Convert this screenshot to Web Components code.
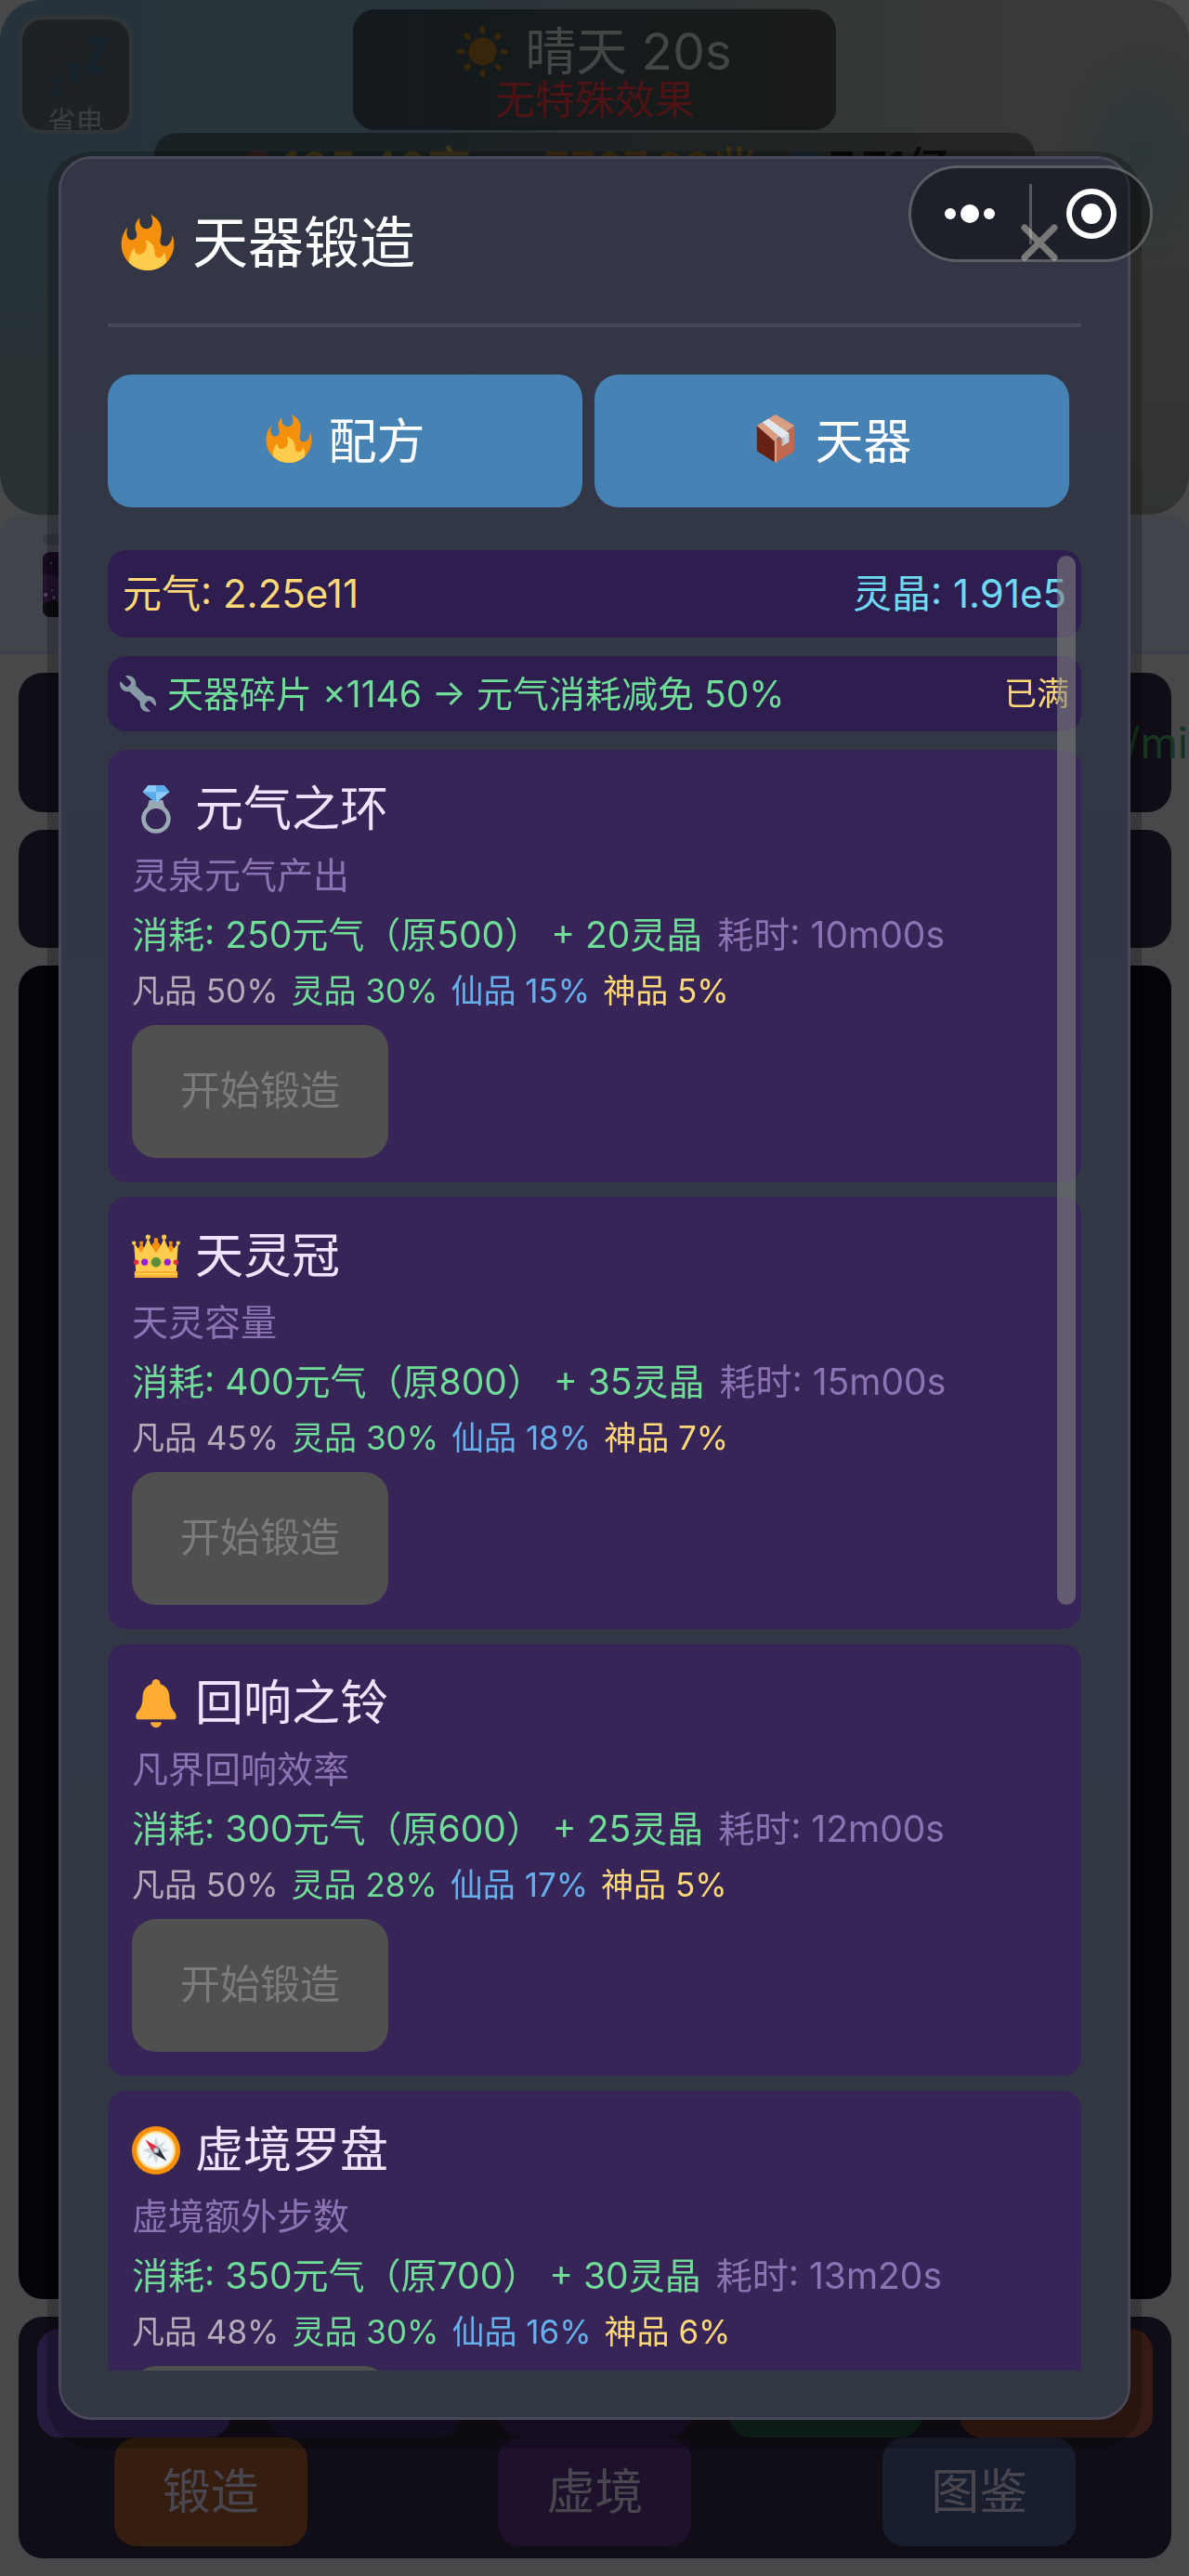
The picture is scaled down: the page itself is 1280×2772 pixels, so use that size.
<!DOCTYPE html>
<html lang="zh-CN">
<head>
<meta charset="utf-8">
<meta name="viewport" content="width=device-width, initial-scale=1">
<title>天器锻造</title>
<style>
html, body { margin: 0; height: 100%; }
body { background: #47484a; font-family: Inter, "Noto Sans CJK SC", sans-serif; overflow: hidden; }
</style>
</head>
<body>
<game-app></game-app>
<script>
const define = (name, html, setup) => {
  const template = document.createElement('template');
  template.innerHTML = '<style>*{box-sizing:border-box}button{font:inherit;border:0;margin:0;padding:0}p,h1,h2{margin:0;font-weight:400}</style>' + html;
  customElements.define(name, class extends HTMLElement {
    constructor() {
      super();
      this.attachShadow({ mode: 'open' }).append(template.content.cloneNode(true));
    }
    connectedCallback() { if (setup) setup(this, this.shadowRoot); }
  });
};

const ICONS = {
  fire: `<path fill="#F4900C" d="M35 19c0-2.062-.367-4.039-1.04-5.868-.46 5.389-3.333 8.157-6.335 6.868-2.812-1.208-.917-5.917-.777-8.164.236-3.809-.012-8.169-6.931-11.794 2.875 5.5.333 8.917-2.333 9.125-2.958.231-5.667-2.542-4.667-7.042-3.238 2.386-3.332 6.402-2.333 9 1.042 2.708-.042 4.958-2.583 5.208-2.84.28-4.418-3.041-2.963-8.333C2.52 10.965 1 14.805 1 19c0 9.389 7.611 17 17 17s17-7.611 17-17z"/><path fill="#FFCC4D" d="M28.394 23.999c.148 3.084-2.561 4.293-4.019 3.709-2.106-.843-1.541-2.291-2.083-5.291s-2.625-5.083-5.708-6c2.25 6.333-1.247 8.667-3.08 9.084-1.872.426-3.753-.001-3.968-4.007C7.352 23.668 6 26.676 6 30c0 .368.023.73.055 1.09C9.125 34.124 13.342 36 18 36s8.875-1.876 11.945-4.91c.032-.36.055-.722.055-1.09 0-2.187-.584-4.236-1.606-6.001z"/>`,
  box: `<path fill="#662113" d="M4 8.3L18 20v16L5 27.8q-1-.6-1-1.800z"/><path fill="#C1694F" d="M32 8.300L18 20v16l13-8q1-.6 1-2z"/><path fill="#D99E82" d="M17 .5q1-.6 2 0L32 8.300 18.800 18v17.500L18 36l-.8-.5V20L4 8.300z"/><path fill="#CCD6DD" d="M8.300 5.800L12.500 3.300 28 14v6.500l-5.300 3.200v-6z"/><path fill="#E1E8ED" d="M8.300 5.800L12.500 3.300 28 14l-5.300 3.800z"/><path fill="#AEBBC1" d="M22.700 17.800l1.500-1v6l-1.500.9z"/>`,
  wrench: `<path fill="#8899A6" d="M27.989 19.977c-.622 0-1.225.078-1.806.213L15.811 9.818c.134-.581.212-1.184.212-1.806C16.023 3.587 12.436 0 8.012 0 7.110 0 6.248.160 5.440.434l5.144 5.144c.791.791.791 2.074 0 2.865l-2.143 2.143c-.791.791-2.074.791-2.865 0L.434 5.442C.160 6.248 0 7.110 0 8.012c0 4.424 3.587 8.011 8.012 8.011.622 0 1.225-.078 1.806-.212L20.190 26.183c-.135.581-.213 1.184-.213 1.806C19.977 32.413 23.564 36 27.989 36c.901 0 1.763-.160 2.569-.435l-5.144-5.144c-.791-.791-.791-2.074 0-2.865l2.143-2.142c.791-.791 2.074-.791 2.865 0l5.144 5.144C35.840 29.752 36 28.890 36 27.989c0-4.425-3.587-8.012-8.011-8.012z"/>`,
  ring: `<circle cx="18" cy="25" r="9.300" fill="none" stroke="#99AAB5" stroke-width="3.200"/><path fill="#99AAB5" d="M13 11h10l2 7-3-1.500q-4-1.200-8 0L11 18z"/><path fill="#8CCAF7" d="M12 0h12l4 5-10 8L8 5z"/><path fill="#5DADEC" d="M18 0h6l4 5H18zM8 5h10v8z"/>`,
  crown: `<g fill="#F4900C"><path d="M3 15L7 8l4 7 7-10 7 10 4-7 4 7z"/><circle cx="7" cy="8" r="1.400"/><circle cx="18" cy="5.700" r="1.600"/><circle cx="29" cy="8" r="1.400"/></g><path fill="#FFCC4D" d="M1.500 8C4 11 5 13 7 15c2-3 4-7 5-11 2 5 3 8 6 11 3-3 4-6 6-11 1 4 3 8 5 11 2-2 3-4 5.500-7L33 30H3z"/><g fill="#FFCC4D"><circle cx="12" cy="3.500" r="1.800"/><circle cx="24" cy="3.500" r="1.800"/><circle cx="1.500" cy="8" r="1.500"/><circle cx="34.500" cy="8" r="1.500"/></g><path fill="#FFAC33" d="M2 29h32v5H2z"/><path fill="#FFCC4D" d="M2 30.500h32v1.500H2z"/><circle cx="3.200" cy="22.300" r="1.900" fill="#DD2E44"/><circle cx="32.800" cy="22.300" r="1.900" fill="#DD2E44"/><circle cx="9.500" cy="22.300" r="2.500" fill="#9721D8"/><circle cx="26.500" cy="22.300" r="2.500" fill="#9721D8"/><circle cx="18" cy="22.300" r="3.700" fill="#5C913B"/>`,
  bell: `<g fill="#FFAC33"><path d="M28 13c0 11 5 10 5 15 0 0 0 2-2 2H5c-2 0-2-2-2-2 0-5 5-4 5-15C8 7.478 12.477 3 18 3s10 4.478 10 10z"/><circle cx="18" cy="3" r="3"/><path d="M18 36c2.209 0 4-1.791 4-4h-8c0 2.209 1.791 4 4 4z"/></g>`,
  compass: `<circle cx="18" cy="18" r="18" fill="#F4900C"/><circle cx="18" cy="18" r="14.500" fill="#FFD983"/><circle cx="18" cy="18" r="13" fill="#F5F8FA"/><path fill="#CCD6DD" d="M18 8l2 6 5-3-3 5 6 2-6 2 3 5-5-3-2 6-2-6-5 3 3-5-6-2 6-2-3-5 5 3z"/><path fill="#DD2E44" d="M10 10l10 6-4 4z"/><path fill="#292F33" d="M26 26l-10-6 4-4z"/><circle cx="18" cy="18" r="2.200" fill="#9AAAB4"/><circle cx="18" cy="18" r="1.200" fill="#E1E8ED"/>`,
  sun: `<g fill="#37260b"><circle cx="18" cy="18" r="9.800"/><ellipse cx="18" cy="2.700" rx="2" ry="2.700"/><ellipse cx="18" cy="33.300" rx="2" ry="2.700"/><ellipse cx="2.800" cy="18" rx="2.800" ry="2"/><ellipse cx="33.200" cy="18" rx="2.800" ry="2"/><g transform="rotate(45 18 18)"><ellipse cx="18" cy="2.700" rx="2" ry="2.700"/><ellipse cx="18" cy="33.300" rx="2" ry="2.700"/><ellipse cx="2.700" cy="18" rx="2.700" ry="2"/><ellipse cx="33.300" cy="18" rx="2.700" ry="2"/></g></g>`,
  sleep: `<g fill="none" stroke="#15242c" stroke-linejoin="round" stroke-linecap="round"><path stroke-width="4" d="M26 3h8L25 19h8"/><path stroke-width="3" d="M15 17h4l-4 7h4"/><path stroke-width="2.500" d="M6 25h3l-4 8h4"/></g>`,
  coin: `<circle cx="18" cy="18" r="17" fill="#33211e"/>`,
  spark: `<path fill="#2f2412" d="M9 2l6 14 6-12 6 12-4 18H8z"/>`,
  gem: `<path fill="#182834" d="M8 2h20l8 10-18 22L0 12z"/>`
};

define('pic-icon', `<style>:host{display:block;flex:none;width:1em;height:1em}svg{display:block;width:100%;height:100%}</style><svg viewBox="0 0 36 36" aria-hidden="true"></svg>`,
  (el, root) => { root.querySelector('svg').innerHTML = ICONS[el.getAttribute('name')]; });

define('weather-card', `<style>
:host{display:block;width:520px;padding:15px 0 11px;border-radius:24px;background:rgba(0,0,0,.5);text-align:center}
h2{display:flex;justify-content:center;align-items:center;gap:18px;font-size:55px;line-height:60px;color:#444646}
p{font-size:43px;line-height:44px;color:#4d1315}
</style><h2><pic-icon name="sun"></pic-icon><slot></slot></h2><p><slot name="effect"></slot></p>`);

define('power-button', `<style>
:host{display:block;width:123px;height:127px}
button{display:flex;flex-direction:column;align-items:center;gap:6px;width:100%;height:100%;padding-top:18px;overflow:hidden;border:4px solid #303537;border-radius:26px;background:#1e2224;color:#3a3f40;font-size:30px;line-height:34px}
pic-icon{font-size:68px}
</style><button type="button"><pic-icon name="sleep"></pic-icon><slot></slot></button>`);

define('resource-bar', `<style>
:host{display:flex;justify-content:center;align-items:center;gap:32px;width:948px;height:76px;border-radius:24px;background:rgba(0,0,0,.35);font-size:48px;line-height:56px;font-weight:500}
span{display:flex;align-items:center;gap:6px}
.a{color:#3d3717}.b{color:#402f11}.c{color:#08090a}
pic-icon{font-size:40px}
</style><span class="a"><pic-icon name="coin"></pic-icon>105.40京</span><span class="b"><pic-icon name="spark"></pic-icon>7707.99兆</span><span class="c"><pic-icon name="gem"></pic-icon>7.71亿</span>`);

define('sky-scene', `<style>
:host{display:grid;grid-template-columns:1fr 520px 1fr;align-items:start;align-content:start;row-gap:3px;height:20vh;padding-top:10px;border-radius:44px;
background:radial-gradient(ellipse 90px 120px at 96% 30%,#2c373a,transparent),linear-gradient(180deg,transparent 30%,rgba(44,48,44,.6)),linear-gradient(90deg,#26333a 0,#28343a 35%,#303637 60%,#383938 85%,#383938 100%)}
power-button{margin:7px 0 -4px 20px}
weather-card{grid-column:2}
resource-bar{grid-column:1/-1;justify-self:center}
</style><power-button>省电</power-button><weather-card>晴天 20s<span slot="effect">无特殊效果</span></weather-card><resource-bar></resource-bar>`);

define('world-strip', `<style>
:host{display:flex;flex-direction:column;gap:7px;height:150px;padding:20px 46px;background:#41444b;border-bottom:3px solid #3b424d;border-radius:24px 24px 0 0}
i{display:block;width:60px;height:13px;border-radius:7px;background:#363a44}
svg{display:block;width:70px;height:70px;border-radius:8px}
</style><i></i><svg viewBox="0 0 70 70" aria-hidden="true"><path fill="#170c20" d="M0 0h70v70H0z"/><path fill="#22142f" d="M0 25q10-3 20 4V60H0z"/><path fill="#0c0e0f" d="M0 57q12-10 20 0v13H0z"/><g fill="#575060"><circle cx="3" cy="46" r="2"/><circle cx="9" cy="12" r="1"/><circle cx="10" cy="41" r="1"/><circle cx="12" cy="49" r="1.500"/></g></svg>`);

define('nav-dock', `<style>
:host{display:flex;flex-direction:column;padding:13px 0;border-radius:26px;background:#110d17}
nav{display:flex;justify-content:space-around}
button{width:208px;height:117px;padding-bottom:8px;border-radius:24px;font-size:52px;color:#4a464f;background:var(--c)}
</style>
<nav><button style="--c:#261a3f"></button><button style="--c:#171027"></button><button style="--c:#1a1129"></button><button style="--c:#11231b"></button><button style="--c:#351a15"></button></nav>
<nav><button style="--c:#351e10">锻造</button><button style="--c:#1d112c">虚境</button><button style="--c:#191e2f">图鉴</button></nav>`);

define('top-capsule', `<style>
:host{display:flex;align-items:center;width:263px;height:104px;border:3px solid rgba(255,255,255,.28);border-radius:52px;background:rgba(0,0,0,.4)}
button{flex:1;height:100%;background:none}
svg{display:block;margin:auto}
i{width:3px;height:65px;background:rgba(255,255,255,.25)}
</style><button type="button" aria-label="更多"><svg width="60" height="24"><g fill="#fff"><circle cx="8" cy="12" r="6"/><circle cx="29" cy="12" r="10"/><circle cx="50" cy="12" r="6"/></g></svg></button><i></i><button type="button" aria-label="关闭小程序"><svg width="56" height="56"><circle cx="28" cy="28" r="24" fill="none" stroke="#fff" stroke-width="6"/><circle cx="28" cy="28" r="11" fill="#fff"/></svg></button>`);

define('info-bar', `<style>
:host{display:flex;align-items:center;justify-content:space-between;border-radius:20px;background:#2e1d4f;font-size:42px;line-height:54px;padding:20px 16px;color:#ffd978}
:host([compact]){font-size:39px;line-height:49px;padding:16px 13px;color:#6fdc98}
</style><slot></slot>`);

define('recipe-card', `<style>
:host{display:flex;flex-direction:column;align-items:flex-start;gap:10px;flex:none;padding:30px 26px 26px;border-radius:20px;background:#372557;font-size:39px;line-height:54px}
h2{display:flex;align-items:center;gap:16px;font-size:52px;line-height:68px;color:#efe4ff}
.desc,.time{color:#8b74b3}
.cost{display:flex;gap:16px;color:#6fdc98;white-space:pre}
.odds{display:flex;gap:14px;padding-bottom:4px;font-size:35px;line-height:46px}
.odds :nth-child(1){color:#b3adb9}.odds :nth-child(2){color:#6fdc98}.odds :nth-child(3){color:#66b0ee}.odds :nth-child(4){color:#ffd978}
button{width:276px;height:143px;padding-bottom:4px;border-radius:26px;background:#505050;color:#7b7b7b;font-size:43px}
</style><h2><pic-icon></pic-icon><slot></slot></h2><p class="desc"></p><p class="cost"><span></span><span class="time"></span></p><p class="odds"><span></span><span></span><span></span><span></span></p><button type="button" disabled>开始锻造</button>`,
(el, root) => {
  const a = n => el.getAttribute(n), q = s => root.querySelector(s);
  const icon = document.createElement('pic-icon');
  icon.setAttribute('name', a('icon'));
  q('pic-icon').replaceWith(icon);
  q('.desc').textContent = a('desc');
  q('.cost span').textContent = `消耗: ${a('energy')}元气（原${a('energy') * 2}） + ${a('crystal')}灵晶`;
  q('.time').textContent = `耗时: ${a('time')}`;
  const odds = a('odds').split(' ');
  root.querySelectorAll('.odds span').forEach((s, i) => { s.textContent = `${['凡品', '灵品', '仙品', '神品'][i]} ${odds[i]}%`; });
});

define('forge-dialog', `<style>
:host{position:relative;display:flex;flex-direction:column;flex:1;min-width:0;padding:50px;border:3px solid #484859;border-radius:36px;background:linear-gradient(#323645,#313844) padding-box}
:host::before{content:"";position:absolute;z-index:-1;inset:-8px -15px -34px;border-radius:48px;background:rgba(0,0,0,.22)}
header{display:flex;align-items:center;justify-content:space-between;padding:0 13px 47px 13px;border-bottom:4px solid #45465a}
h1{display:flex;align-items:center;gap:18px;font-size:60px;line-height:80px;color:#fff}
.close{width:64px;height:64px;background:none}
.close svg{display:block;margin:auto}
.tabs{display:flex;margin:51px 0 46px}
.tabs button{flex:1;display:flex;align-items:center;justify-content:center;gap:16px;height:143px;margin-right:13px;padding-bottom:6px;border-radius:26px;background:#4682b4;color:#fff;font-size:52px}
.body{position:relative;flex:1;min-height:0;display:flex;flex-direction:column;overflow:hidden}
.list{display:flex;flex-direction:column;gap:16px;margin-top:20px}
info-bar + info-bar{margin-top:20px}
.crystal{color:#6edaf2}.tip{display:flex;align-items:center;gap:12px}.full{font-size:35px;color:#ffd978}
.thumb{position:absolute;top:6px;right:6px;width:20px;height:1129px;border-radius:10px;background:rgba(128,128,128,.6)}
</style>
<header><h1><pic-icon name="fire"></pic-icon>天器锻造</h1><button class="close" type="button" aria-label="关闭"><svg width="40" height="40"><path d="M4 4l32 32M36 4L4 36" stroke="#c8c8c8" stroke-width="7" stroke-linecap="round"/></svg></button></header>
<div class="tabs"><button type="button"><pic-icon name="fire"></pic-icon>配方</button><button type="button"><pic-icon name="box"></pic-icon>天器</button></div>
<div class="body">
<info-bar><span>元气: 2.25e11</span><span class="crystal">灵晶: 1.91e5</span></info-bar>
<info-bar compact><span class="tip"><pic-icon name="wrench"></pic-icon>天器碎片 ×1146 → 元气消耗减免 50%</span><span class="full">已满</span></info-bar>
<div class="list"><slot></slot></div>
<div class="thumb"></div>
</div>`);

define('game-app', `<style>
:host{display:flex;flex-direction:column;height:100vh;background:#47484a}
main{display:flex;flex-direction:column;flex:1;min-height:0;gap:19px;padding:20px 19px 19px 20px}
section{border-radius:26px;background:#110d17}
.rate{display:flex;justify-content:flex-end;align-items:center;height:150px;font-size:46px;color:#17361f;white-space:nowrap}
.rate span{margin-right:-18px}
.row{height:127px}
.stage{flex:1;background:#05030a}
.overlay{position:fixed;z-index:1;inset:0;display:flex;padding:168px 63px}
top-capsule{position:fixed;z-index:2;top:178px;right:39px}
</style>
<sky-scene></sky-scene>
<world-strip></world-strip>
<main><section class="rate"><span>/mi</span></section><section class="row"></section><section class="stage"></section><nav-dock></nav-dock></main>
<div class="overlay"><forge-dialog>
<recipe-card icon="ring" desc="灵泉元气产出" energy="250" crystal="20" time="10m00s" odds="50 30 15 5">元气之环</recipe-card>
<recipe-card icon="crown" desc="天灵容量" energy="400" crystal="35" time="15m00s" odds="45 30 18 7">天灵冠</recipe-card>
<recipe-card icon="bell" desc="凡界回响效率" energy="300" crystal="25" time="12m00s" odds="50 28 17 5">回响之铃</recipe-card>
<recipe-card icon="compass" desc="虚境额外步数" energy="350" crystal="30" time="13m20s" odds="48 30 16 6">虚境罗盘</recipe-card>
</forge-dialog></div>
<top-capsule></top-capsule>`);
</script>
</body>
</html>
